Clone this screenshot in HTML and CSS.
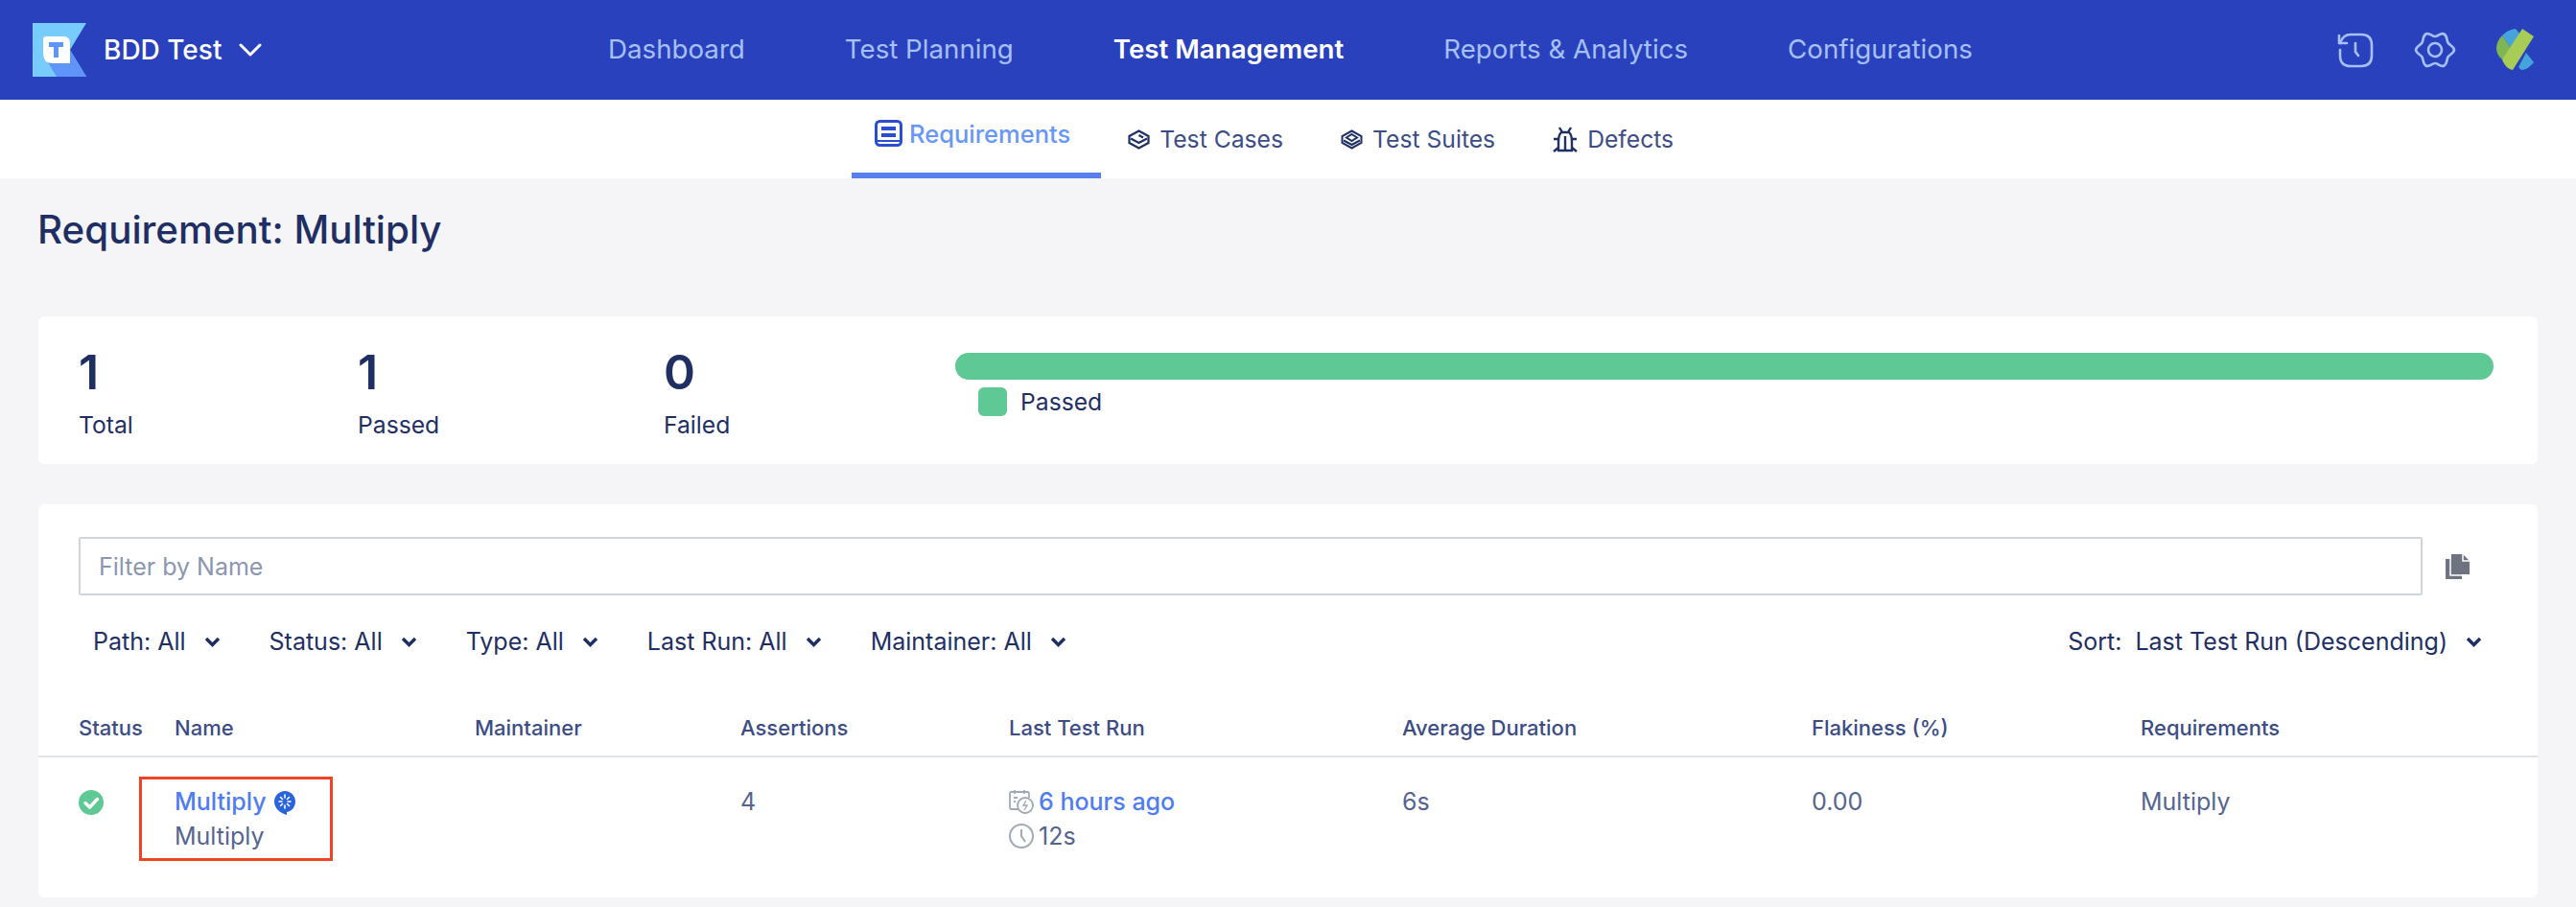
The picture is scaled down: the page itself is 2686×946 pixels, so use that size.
FILE: index.html
```html
<!DOCTYPE html>
<html lang="en">
<head>
    <meta charset="UTF-8">
    <title>Requirement: Multiply</title>
    <link rel="stylesheet" href="styles.css">
</head>
<body>
    <div class="topbar">
        <div class="brand">
            <svg class="logo" width="56" height="56" viewBox="0 0 56 56">
                <path d="M0 0H56L39 28L56 56H0Z" fill="#78ccfd"/>
                <path d="M16 41L25 56H56L39 28Z" fill="#5f95f8"/>
                <path d="M14 14H32Q39 14 39 21V42H21Q11 42 11 32V17Q11 14 14 14Z" fill="#fff"/>
                <path d="M17 20H32V25H27V36H22V25H17Z" fill="#5f95f8"/>
            </svg>
            <span class="brand-name">BDD Test</span>
            <svg width="24" height="14" viewBox="0 0 24 14"><path d="M2 2L12 12L22 2" fill="none" stroke="#fff" stroke-width="3" stroke-linecap="round" stroke-linejoin="round"/></svg>
        </div>
        <div class="nav">
            <span>Dashboard</span>
            <span>Test Planning</span>
            <span class="active">Test Management</span>
            <span>Reports &amp; Analytics</span>
            <span>Configurations</span>
        </div>
        <div class="top-icons">
            <svg width="38" height="38" viewBox="0 0 38 38" fill="none" stroke="#a6c0fa" stroke-width="2.6" stroke-linecap="round" stroke-linejoin="round">
                <path d="M3 12C5 6 9 3 14 3H25Q36 3 36 14V25Q36 36 25 36H14Q3 36 3 25V19"/>
                <path d="M2 4V12H10"/>
                <path d="M19 12V21L22 25"/>
            </svg>
            <svg width="44" height="38" viewBox="0 0 44 38" fill="none" stroke="#a6c0fa" stroke-width="2.6">
                <path d="M42 19C42 15.500 37 14.100 35.500 11.500C34 8.900 35 4.500 31.500 2.500C28 0.500 25 5 22 5C19 5 16 0.500 12.500 2.500C9 4.500 10 8.900 8.500 11.500C7 14.100 2 15.500 2 19C2 22.500 7 23.900 8.500 26.500C10 29.100 9 33.500 12.500 35.500C16 37.500 19 33 22 33C25 33 28 37.500 31.500 35.500C35 33.500 34 29.100 35.500 26.500C37 23.900 42 22.500 42 19Z"/>
                <circle cx="22" cy="19" r="7"/>
            </svg>
            <svg width="40" height="44" viewBox="0 0 40 44">
                <path d="M6 7Q12 1 20 0L26 7L16 22Z" fill="#46a4dd"/>
                <path d="M6 7C-2 15 -2 26 6 32L16 22Z" fill="#7fb654"/>
                <path d="M31 25L39 35C35 40 30 43 26 43L23 40Z" fill="#46a4dd"/>
                <path d="M27 0L39 8L17 43C12 42 8 38 6 32Z" fill="#a8cc55"/>
            </svg>
        </div>
    </div>

    <div class="subnav">
        <div class="tab active">
            <svg width="29" height="28" viewBox="0 0 29 28" fill="none">
                <rect x="1.500" y="1.500" width="26" height="25" rx="4" stroke="#2b4ed1" stroke-width="3"/>
                <rect x="7" y="7" width="15" height="4" fill="#2b4ed1"/>
                <rect x="7" y="14" width="15" height="4" fill="#2b4ed1"/>
                <path d="M3 22H26" stroke="#2b4ed1" stroke-width="2"/>
            </svg>
            Requirements
        </div>
        <div class="tab">
            <svg width="23" height="21" viewBox="0 0 23 21" fill="none" stroke="#1f2f63" stroke-width="2.200">
                <path d="M11.500 1.500L21.500 7V14L11.500 19.500L1.500 14V7Z"/>
                <path d="M3 9.500L11.500 14L20 9.500"/>
                <path d="M11.500 6L16 8.500"/>
            </svg>
            Test Cases
        </div>
        <div class="tab">
            <svg width="23" height="21" viewBox="0 0 23 21" fill="none" stroke="#1f2f63" stroke-width="2">
                <path d="M11.500 1.500L21.500 7V14L11.500 19.500L1.500 14V7Z"/>
                <path d="M11.500 5L17 8.500L11.500 12L6 8.500Z"/>
                <path d="M3 11.500L11.500 16L20 11.500"/>
            </svg>
            Test Suites
        </div>
        <div class="tab">
            <svg width="26" height="27" viewBox="0 0 26 27" fill="none" stroke="#1f2f63" stroke-width="2.400">
                <path d="M7 1L10 6M19 1L16 6M1 13H6M25 13H20M1 26L6 22M25 26L20 22"/>
                <path d="M9 6H17Q20 9 20 15V25H6V15Q6 9 9 6Z"/>
                <path d="M13 10V25"/>
            </svg>
            Defects
        </div>
    </div>

    <div class="content">
        <h1 class="page-title">Requirement: Multiply</h1>

        <div class="card stats-card">
            <div class="stat stat-total">
                <div class="stat-num">1</div>
                <div class="stat-label">Total</div>
            </div>
            <div class="stat stat-passed">
                <div class="stat-num">1</div>
                <div class="stat-label">Passed</div>
            </div>
            <div class="stat stat-failed">
                <div class="stat-num">0</div>
                <div class="stat-label">Failed</div>
            </div>
            <div class="progress">
                <div class="progress-bar"></div>
                <div class="legend"><span class="legend-box"></span>Passed</div>
            </div>
        </div>

        <div class="card list-card">
            <div class="search-row">
                <input class="search" type="text" placeholder="Filter by Name">
                <svg width="25" height="26" viewBox="0 0 25 26">
                    <path d="M0 5H7V21H17V26H0Z" fill="#6d7480"/>
                    <path d="M6 0H18L25 7V21H6Z" fill="#6d7480"/>
                    <path d="M5 2V22H17" fill="none" stroke="#fff" stroke-width="1.500"/>
                    <path d="M18 0V7H25" fill="none" stroke="#fff" stroke-width="1.500"/>
                </svg>
            </div>
            <div class="filters">
                <span class="filter">Path: All<svg class="chev" width="17" height="11" viewBox="0 0 17 11"><path d="M2 2L8.500 8.500L15 2" fill="none" stroke="#1f2f63" stroke-width="3.400"/></svg></span>
                <span class="filter">Status: All<svg class="chev" width="17" height="11" viewBox="0 0 17 11"><path d="M2 2L8.500 8.500L15 2" fill="none" stroke="#1f2f63" stroke-width="3.400"/></svg></span>
                <span class="filter">Type: All<svg class="chev" width="17" height="11" viewBox="0 0 17 11"><path d="M2 2L8.500 8.500L15 2" fill="none" stroke="#1f2f63" stroke-width="3.400"/></svg></span>
                <span class="filter">Last Run: All<svg class="chev" width="17" height="11" viewBox="0 0 17 11"><path d="M2 2L8.500 8.500L15 2" fill="none" stroke="#1f2f63" stroke-width="3.400"/></svg></span>
                <span class="filter">Maintainer: All<svg class="chev" width="17" height="11" viewBox="0 0 17 11"><path d="M2 2L8.500 8.500L15 2" fill="none" stroke="#1f2f63" stroke-width="3.400"/></svg></span>
                <span class="filter sort">Sort:&nbsp; Last Test Run (Descending)<svg class="chev" width="17" height="11" viewBox="0 0 17 11"><path d="M2 2L8.500 8.500L15 2" fill="none" stroke="#1f2f63" stroke-width="3.400"/></svg></span>
            </div>
            <div class="table-row table-head">
                <div>Status</div>
                <div>Name</div>
                <div>Maintainer</div>
                <div>Assertions</div>
                <div>Last Test Run</div>
                <div>Average Duration</div>
                <div>Flakiness (%)</div>
                <div>Requirements</div>
            </div>
            <div class="table-row table-body">
                <div>
                    <svg class="status-icon" width="26" height="26" viewBox="0 0 26 26">
                        <circle cx="13" cy="13" r="13" fill="#5ec995"/>
                        <path d="M7 13.500L11.500 18L19.500 9.500" fill="none" stroke="#fff" stroke-width="3.400" stroke-linecap="round" stroke-linejoin="round"/>
                    </svg>
                </div>
                <div>
                    <div class="line link">Multiply
                        <svg class="cucumber" width="22" height="25" viewBox="0 0 22 25">
                            <path d="M11 0C17 0 22 5 22 11C22 17 18 21 13 22V25C6 23 0 18 0 11C0 5 5 0 11 0Z" fill="#2b63dc"/>
                            <path d="M11 4V7M11 15V18M5 11H8M14 11H17M6.500 6.500L8.500 8.500M15.500 6.500L13.500 8.500M6.500 15.500L8.500 13.500M15.500 15.500L13.500 13.500" stroke="#fff" stroke-width="1.600" stroke-linecap="round"/>
                        </svg>
                    </div>
                    <div class="line">Multiply</div>
                </div>
                <div></div>
                <div class="line">4</div>
                <div>
                    <div class="line link run-line">
                        <svg class="run-icon" width="26" height="26" viewBox="0 0 26 26" fill="none" stroke="#a0a9b4" stroke-width="1.800">
                            <path d="M10 21H3Q1 21 1 19V5Q1 3 3 3H19Q21 3 21 5V9"/>
                            <path d="M6 1V5M16 1V5M5 9H9M5 13H7"/>
                            <circle cx="17" cy="17" r="8"/>
                            <path d="M18 12L15 17H19L16 22" stroke-width="1.400"/>
                        </svg>
                        6 hours ago
                    </div>
                    <div class="line run-line">
                        <svg class="run-icon" width="26" height="26" viewBox="0 0 26 26" fill="none" stroke="#a0a9b4" stroke-width="2">
                            <circle cx="13" cy="13" r="12"/>
                            <path d="M13 6V13L17 19"/>
                        </svg>
                        12s
                    </div>
                </div>
                <div class="line">6s</div>
                <div class="line">0.00</div>
                <div class="line">Multiply</div>
            </div>
            <div class="highlight"></div>
        </div>
    </div>
</body>
</html>
```

FILE: styles.css
```css
* {
    margin: 0;
    padding: 0;
    box-sizing: border-box;
    font-family: Inter, "Noto Sans", sans-serif;
}

body {
    background-color: #f5f5f8;
    color: #1f2f63;
    overflow: hidden;
}

.topbar {
    display: flex;
    align-items: center;
    height: 104px;
    padding: 0 43px 0 34px;
    background-color: #2a41bd;
}

.brand {
    display: flex;
    align-items: center;
    width: 600px;
}

.brand-name {
    margin-left: 18px;
    margin-right: 18px;
    color: #fff;
    font-size: 28px;
    font-weight: 500;
}

.nav {
    display: flex;
    gap: 104px;
    padding-bottom: 3px;
    color: #a6c0fa;
    font-size: 27.7px;
}

.nav .active {
    color: #fff;
    font-weight: 600;
}

.top-icons {
    display: flex;
    align-items: center;
    gap: 42px;
    margin-left: auto;
}

.subnav {
    display: flex;
    height: 82px;
    padding-left: 888px;
    background-color: #fff;
}

.tab {
    display: flex;
    align-items: center;
    gap: 10px;
    padding: 0 32px 0 28px;
    color: #3c4c85;
    font-size: 24.7px;
}

.tab.active {
    gap: 7px;
    padding: 0 32px 6px 24px;
    border-bottom: 6px solid #5680ee;
    color: #6797f8;
    font-size: 25.5px;
    font-weight: 500;
}

.content {
    padding: 0 40px;
}

.page-title {
    height: 144px;
    margin-left: -1px;
    padding-top: 32px;
    font-size: 40.3px;
    font-weight: 500;
    line-height: 44px;
}

.card {
    background-color: #fff;
    border-radius: 6px;
}

.stats-card {
    display: flex;
    height: 154px;
    margin-bottom: 42px;
    padding-left: 42px;
}

.stat-num {
    padding-top: 30px;
    font-size: 50px;
    font-weight: 600;
    line-height: 56px;
}

.stat-label {
    margin-top: 12px;
    font-size: 24.7px;
    line-height: 30px;
}

.stat-total { width: 291px; }
.stat-passed { width: 319px; }
.stat-failed { width: 304px; }

.progress {
    flex: 1;
    padding: 38px 46px 0 0;
}

.progress-bar {
    height: 28px;
    background-color: #5ec995;
    border-radius: 14px;
}

.legend {
    display: flex;
    align-items: center;
    margin: 8px 0 0 24px;
    font-size: 24.7px;
    line-height: 30px;
}

.legend-box {
    width: 30px;
    height: 30px;
    margin-right: 14px;
    background-color: #5ec995;
    border-radius: 6px;
}

.list-card {
    position: relative;
    height: 410px;
}

.search-row {
    display: flex;
    align-items: center;
    gap: 24px;
    padding: 34px 71px 0 42px;
}

.search {
    flex: 1;
    height: 61px;
    padding: 0 19px;
    border: 2px solid #d0d5da;
    border-radius: 2px;
    font-size: 25px;
    outline: none;
}

.search::placeholder {
    color: #8c96b0;
}

.filters {
    display: flex;
    align-items: center;
    height: 48px;
    margin-top: 24px;
    padding: 0 58px 0 57px;
    font-size: 25px;
}

.filter {
    display: flex;
    align-items: center;
    margin-right: 51px;
    white-space: pre;
}

.chev {
    margin-left: 19px;
}

.sort {
    margin-left: auto;
    margin-right: 0;
}

.table-row {
    display: grid;
    grid-template-columns: 100px 313px 277px 280px 410px 427px 343px 1fr;
    padding-left: 42px;
}

.table-head {
    margin-top: 53px;
    padding-bottom: 16px;
    border-bottom: 2px solid #e0e3e8;
    color: #3c4c85;
    font-size: 22px;
    font-weight: 500;
    line-height: 26px;
}

.table-body {
    padding-top: 28px;
    color: #55648f;
    font-size: 25px;
}

.line {
    height: 36px;
    line-height: 36px;
}

.link {
    color: #4f7cf0;
    font-weight: 500;
}

.run-line {
    display: flex;
    align-items: center;
    gap: 5px;
}

.run-icon {
    flex-shrink: 0;
}

.cucumber {
    vertical-align: -5px;
    margin-left: 2px;
}

.status-icon {
    margin-top: 6px;
}

.highlight {
    position: absolute;
    left: 105px;
    top: 284px;
    width: 202px;
    height: 88px;
    border: 3px solid #ee4423;
}
```
